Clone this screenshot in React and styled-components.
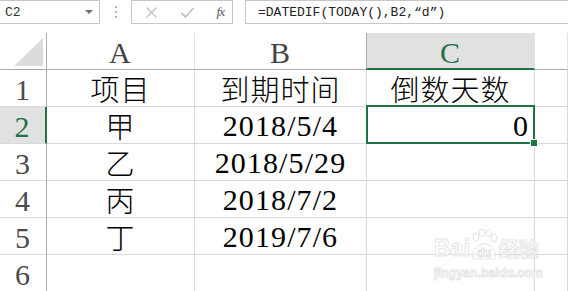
import React from 'react';
import styled, { createGlobalStyle, css } from 'styled-components';

const green = '#217346';
const gridLine = '#d9d9d9';
const headLine = '#ababab';
const selBg = '#e1e1e1';

const colWidths = [47, 148, 172, 168];

const GlobalStyle = createGlobalStyle`
	html, body {
		margin: 0;
		padding: 0;
		background: #fff;
		overflow: hidden;
	}
	body {
		font-family: 'Liberation Sans', 'Noto Sans CJK SC', sans-serif;
	}
`;

const Page = styled.div`
	position: relative;
	width: 568px;
	height: 291px;
	overflow: hidden;
	background: #fff;
`;

const FormulaBar = styled.div`
	display: flex;
	align-items: stretch;
	height: 24px;
`;

const NameBox = styled.div`
	width: 100px;
	box-sizing: border-box;
	border: 1px solid #c6c6c6;
	border-left: none;
	display: flex;
	align-items: center;
	justify-content: space-between;
	padding: 0 6px 0 5px;
	font-family: 'Liberation Mono', monospace;
	font-size: 13px;
	color: #333;
`;

const Caret = styled.span`
	width: 0;
	height: 0;
	border-left: 4px solid transparent;
	border-right: 4px solid transparent;
	border-top: 4px solid #6f6f6f;
	margin-top: -1px;
`;

const Grip = styled.div`
	width: 31px;
	display: flex;
	flex-direction: column;
	align-items: center;
	justify-content: center;
	gap: 3px;
	& > span {
		width: 2px;
		height: 2px;
		background: #b4b4b4;
	}
`;

const FxGroup = styled.div`
	width: 102px;
	box-sizing: border-box;
	border: 1px solid #c6c6c6;
	display: flex;
	align-items: center;
	justify-content: space-between;
	padding: 0 8px 0 13px;
`;

const FxIcon = styled.span`
	font-family: 'Liberation Serif', serif;
	font-style: italic;
	font-size: 13px;
	color: #555;
	letter-spacing: -1px;
`;

const FormulaInput = styled.div`
	flex: 1;
	margin-left: 12px;
	box-sizing: border-box;
	border: 1px solid #c6c6c6;
	border-right: none;
	display: flex;
	align-items: center;
	padding-left: 12px;
	font-family: 'Liberation Mono', monospace;
	font-size: 13px;
	color: #222;
	white-space: nowrap;
`;

const Sheet = styled.div`
	margin-top: 9px;
	display: grid;
	grid-template-columns: ${colWidths.map(w => w + 'px').join(' ')} 1fr;
	grid-auto-rows: 37px;
`;

const Cell = styled.div`
	position: relative;
	box-sizing: border-box;
	border-right: 1px solid ${gridLine};
	border-bottom: 1px solid ${gridLine};
	padding: 2px 5px 0;
	color: #000;
	white-space: nowrap;
	text-align: ${p => p.$align || 'center'};
	${p => p.$selected && css`
		&::after {
			content: '';
			position: absolute;
			top: -2px;
			left: -1px;
			right: -1px;
			bottom: -1px;
			border: 2px solid ${green};
			pointer-events: none;
			z-index: 2;
		}
		&::before {
			content: '';
			position: absolute;
			right: -4px;
			bottom: -4px;
			width: 6px;
			height: 6px;
			background: ${green};
			border: 1px solid #fff;
			z-index: 3;
		}
	`}
`;

const Num = styled.span`
	font-family: 'Liberation Serif', serif;
	font-size: 30px;
	line-height: 33px;
	letter-spacing: 1.1px;
`;

const Han = styled.span`
	font-family: 'Noto Sans CJK SC', sans-serif;
	font-size: 29px;
	font-weight: 300;
	line-height: 33px;
	letter-spacing: 1px;
`;

const ColHead = styled(Cell)`
	border-right-color: #e2e2e2;
	border-bottom: 1px solid ${headLine};
	color: #444;
	padding-top: 3px;
	${p => p.$active && css`
		background: ${selBg};
		color: ${green};
		border-left: 1px solid ${headLine};
		margin-left: -1px;
		border-bottom: 2px solid ${green};
	`}
`;

const Corner = styled(ColHead)`
	border-right: 1px solid ${headLine};
	&::after {
		content: '';
		position: absolute;
		right: 3px;
		bottom: 3px;
		width: 29px;
		height: 28px;
		background: #dcdcdc;
		clip-path: polygon(100% 0, 100% 100%, 0 100%);
	}
`;

const RowHead = styled(Cell)`
	border-right: 1px solid ${headLine};
	color: #4a4a4a;
	padding: 3px 0 0;
	${p => p.$active && css`
		background: ${selBg};
		color: ${green};
		border-right: 2px solid ${green};
	`}
`;

const Watermark = styled.div`
	position: absolute;
	left: 434px;
	top: 229px;
	display: flex;
	flex-direction: column;
	align-items: flex-start;
	font-family: 'Liberation Sans', 'Noto Sans CJK SC', sans-serif;
	font-weight: 700;
	color: rgba(255, 255, 255, 0.6);
	-webkit-text-stroke: 1px #e6e6e6;
	pointer-events: none;
`;

const MarkTop = styled.div`
	display: flex;
	align-items: flex-end;
	height: 33px;
`;

const MarkWord = styled.span`
	font-size: ${p => p.$size}px;
	line-height: 1;
	margin-bottom: ${p => p.$drop || 0}px;
`;

const MarkUrl = styled.span`
	font-size: 12px;
	letter-spacing: 0.2px;
	margin-top: 4px;
`;

const Paw = () => (
	<svg width='28' height='32' viewBox='0 0 28 32' style={{ margin: '0 1px 1px 0' }}>
		<g fill='rgba(255,255,255,0.6)' stroke='#e4e4e4' strokeWidth='1'>
			<ellipse cx='6' cy='8' rx='3' ry='4' />
			<ellipse cx='12' cy='4' rx='3' ry='3.5' />
			<ellipse cx='19' cy='4' rx='3' ry='3.5' />
			<ellipse cx='24' cy='9' rx='3' ry='4' />
			<path d='M3 30 Q1 20 10 16 Q14 13 18 16 Q27 20 25 30 Z' />
		</g>
		<text x='14' y='28' textAnchor='middle' fontSize='12' fontWeight='700'
			fontFamily='Liberation Sans, sans-serif' fill='rgba(255,255,255,0.7)' stroke='#e0e0e0' strokeWidth='0.8'>du</text>
	</svg>
);

const rows = [
	['项目', '到期时间', '倒数天数'],
	['甲', '2018/5/4', '0'],
	['乙', '2018/5/29', ''],
	['丙', '2018/7/2', ''],
	['丁', '2019/7/6', ''],
	['', '', ''],
];

const isCjk = s => /[\u4e00-\u9fff]/.test(s);

const Value = ({ v }) => (isCjk(v) ? <Han>{v}</Han> : <Num>{v}</Num>);

const App = () => (
	<Page>
		<GlobalStyle />
		<FormulaBar>
			<NameBox>
				C2
				<Caret />
			</NameBox>
			<Grip>
				<span />
				<span />
				<span />
			</Grip>
			<FxGroup>
				<svg width='13' height='13' viewBox='0 0 13 13'>
					<path d='M1.5 1.5 L11.5 11.5 M11.5 1.5 L1.5 11.5' stroke='#c2c2c2' strokeWidth='1.3' />
				</svg>
				<svg width='15' height='13' viewBox='0 0 15 13'>
					<path d='M1.5 7 L5.5 11 L13.5 2' stroke='#c2c2c2' strokeWidth='1.8' fill='none' />
				</svg>
				<FxIcon>fx</FxIcon>
			</FxGroup>
			<FormulaInput>=DATEDIF(TODAY(),B2,“d”)</FormulaInput>
		</FormulaBar>

		<Sheet>
			<Corner />
			<ColHead><Num>A</Num></ColHead>
			<ColHead><Num>B</Num></ColHead>
			<ColHead $active><Num>C</Num></ColHead>
			<ColHead />
			{rows.map((r, i) => (
				<React.Fragment key={i}>
					<RowHead $active={i === 1}><Num>{i + 1}</Num></RowHead>
					{r.map((v, j) => (
						<Cell
							key={j}
							$align={i === 1 && j === 2 ? 'right' : 'center'}
							$selected={i === 1 && j === 2}
						>
							{v && <Value v={v} />}
						</Cell>
					))}
					<Cell />
				</React.Fragment>
			))}
		</Sheet>

		<Watermark>
			<MarkTop>
				<MarkWord $size={23} $drop={2}>Bai</MarkWord>
				<Paw />
				<MarkWord $size={20} $drop={2}>经验</MarkWord>
			</MarkTop>
			<MarkUrl>jingyan.baidu.com</MarkUrl>
		</Watermark>
	</Page>
);

export default App;
